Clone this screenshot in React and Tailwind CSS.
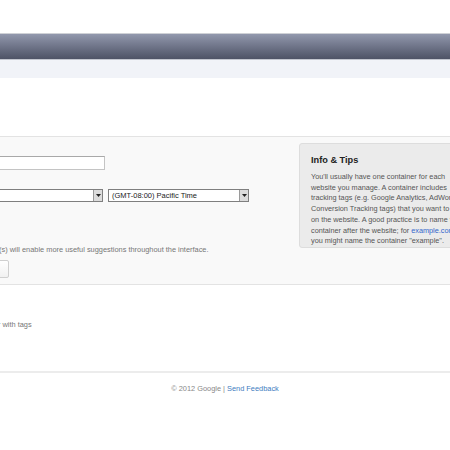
import "react"

const font = { fontFamily: '"Liberation Sans", Arial, sans-serif' }

function Select({ className, children }) {
    return <div className={"flex h-[13px] items-stretch border border-[#7f7f7f] bg-white " + className}>
        <div className="flex-1 overflow-hidden whitespace-nowrap pl-[3px] text-[7.5px] leading-[11px] text-[#222]">{children}</div>
        <div className="flex w-[9px] items-center justify-center border-l border-[#9a9a9a] bg-[#dcdcdc]">
            <svg width="5" height="3" viewBox="0 0 5 3"><path d="M0 0h5L2.5 3z" fill="#222" /></svg>
        </div>
    </div>
}

export default function App() {
    const lines = [
        "You'll usually have one container for each",
        "website you manage. A container includes",
        "tracking tags (e.g. Google Analytics, AdWords",
        "Conversion Tracking tags) that you want to deploy",
        "on the website. A good practice is to name the",
    ]

    return <div className="h-[450px] w-[450px] overflow-hidden bg-white" style={font}>
        <div className="h-[33px]" />
        <div className="h-[26px] border-t border-[#cfd1d6] bg-gradient-to-b from-[#9298ad] to-[#4e5366]" />
        <div className="h-[1px] bg-[#c3c6cf]" />
        <div className="h-[18px] bg-[#f1f3f8]" />
        <div className="h-[58px]" />

        <div className="flex h-[149px] border-y border-[#e3e3e3] bg-[#f9f9f9]">
            <div className="flex w-[299px] shrink-0 flex-col pt-[19px]">
                <div className="-ml-[100px] h-[14px] w-[205px] border border-[#c4c4c4] border-t-[#a9a9a9] bg-white" />
                <div className="-ml-[100px] mt-[19px] flex">
                    <Select className="w-[203px]" />
                    <Select className="ml-[5px] w-[141px]">(GMT-08:00) Pacific Time</Select>
                </div>
                <div className="-ml-[1px] mt-[43px] whitespace-nowrap text-[7.4px] leading-[10px] text-[#777]">
                    (s) will enable more useful suggestions throughout the interface.
                </div>
                <div className="-ml-[51px] mt-[5px] h-[18px] w-[60px] rounded-[2px] border border-[#cfcfcf] bg-gradient-to-b from-white to-[#f1f1f1]" />
            </div>
            <div className="mt-[6px] h-[105px] w-[220px] shrink-0 rounded-[3px] border border-[#dddddd] bg-[#ebebeb] pl-[11px] pt-[11px]">
                <div className="text-[9.2px] font-bold leading-[11px] text-[#222]">Info &amp; Tips</div>
                <div className="mt-[6px] whitespace-nowrap text-[7.3px] leading-[10.7px] text-[#555]">
                    {lines.map((l) => <div key={l}>{l}</div>)}
                    <div>container after the website; for <span className="text-[#3366cc]">example.com</span>,</div>
                    <div>you might name the container "example".</div>
                </div>
            </div>
        </div>

        <div className="flex h-[86px] flex-col">
            <div className="-ml-[2px] mt-[35px] whitespace-nowrap text-[7.4px] leading-[10px] text-[#777]">r with tags</div>
        </div>
        <div className="h-[2px] bg-[#ececec]" />
        <div className="mt-[11px] text-center text-[7.4px] leading-[10px] text-[#888]">
            © 2012 Google | <span className="text-[#3d7cc0]">Send Feedback</span>
        </div>
    </div>
}
